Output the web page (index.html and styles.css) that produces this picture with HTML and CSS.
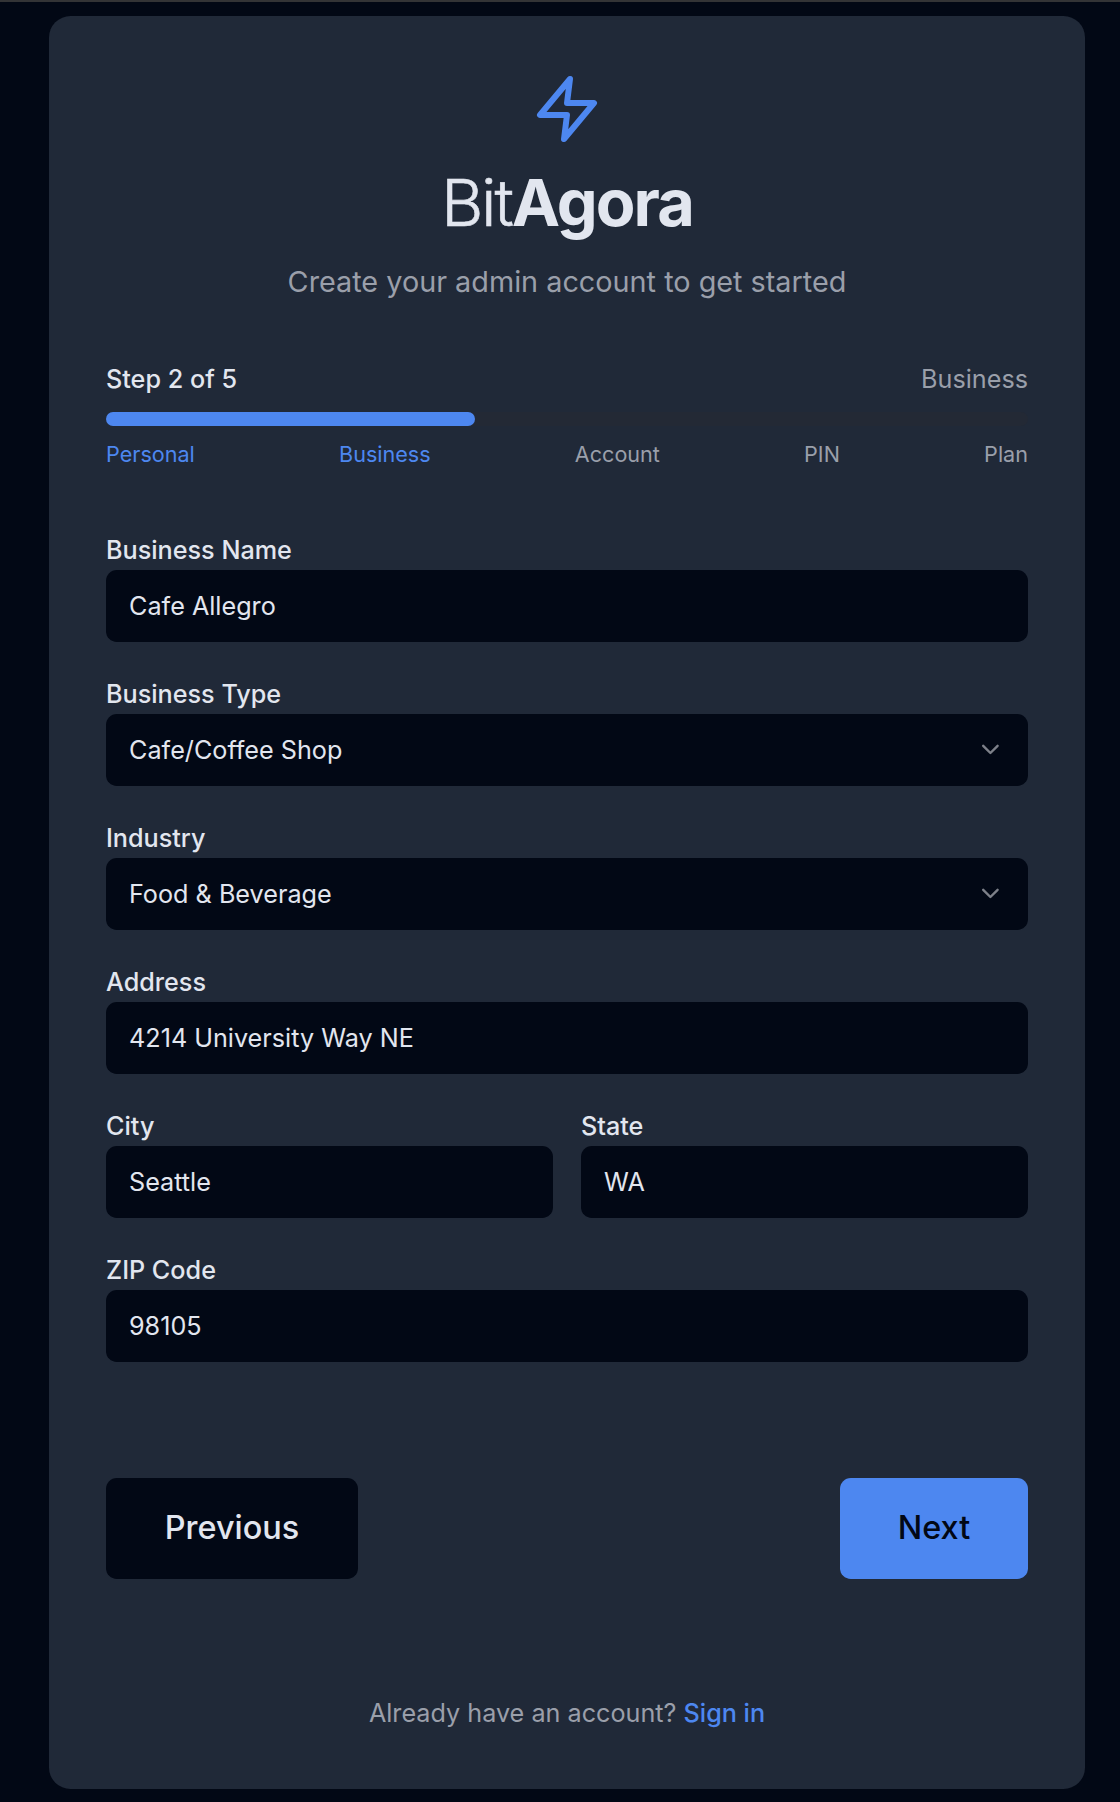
FILE: index.html
```html
<!DOCTYPE html>
<html lang="en">
<head>
<meta charset="utf-8">
<title>BitAgora – Create account</title>
<link rel="stylesheet" href="styles.css">
</head>
<body>
<main class="card">
  <header class="brand">
    <svg class="brand-icon" viewBox="0 0 24 24" fill="none" stroke="currentColor" stroke-width="2" stroke-linecap="round" stroke-linejoin="round"><polygon points="13 2 3 14 12 14 11 22 21 10 12 10 13 2"/></svg>
    <h1 class="brand-name"><span class="light">Bit</span><span>Agora</span></h1>
    <p class="tagline">Create your admin account to get started</p>
  </header>

  <section class="progress">
    <div class="progress-head"><span class="progress-step">Step 2 of 5</span><span class="progress-title">Business</span></div>
    <div class="progress-track"><div class="progress-fill" style="width:40%"></div></div>
    <div class="progress-labels">
      <span class="done">Personal</span><span class="done">Business</span><span>Account</span><span>PIN</span><span>Plan</span>
    </div>
  </section>

  <form class="form">
    <div class="field">
      <label for="name">Business Name</label>
      <input id="name" class="control" type="text" value="Cafe Allegro">
    </div>
    <div class="field">
      <label>Business Type</label>
      <button type="button" class="control select"><span>Cafe/Coffee Shop</span><svg class="chevron" viewBox="0 0 24 24"><path d="m6 9 6 6 6-6"/></svg></button>
    </div>
    <div class="field">
      <label>Industry</label>
      <button type="button" class="control select"><span>Food &amp; Beverage</span><svg class="chevron" viewBox="0 0 24 24"><path d="m6 9 6 6 6-6"/></svg></button>
    </div>
    <div class="field">
      <label for="address">Address</label>
      <input id="address" class="control" type="text" value="4214 University Way NE">
    </div>
    <div class="row">
      <div class="field">
        <label for="city">City</label>
        <input id="city" class="control" type="text" value="Seattle">
      </div>
      <div class="field">
        <label for="state">State</label>
        <input id="state" class="control" type="text" value="WA">
      </div>
    </div>
    <div class="field">
      <label for="zip">ZIP Code</label>
      <input id="zip" class="control" type="text" value="98105">
    </div>
    <div class="actions">
      <button type="button" class="btn btn-dark">Previous</button>
      <button type="button" class="btn btn-primary">Next</button>
    </div>
  </form>

  <p class="signin">Already have an account? <a href="#">Sign in</a></p>
</main>
</body>
</html>
```
FILE: styles.css
```css
:root {
  --bg: #020815;
  --card: #202938;
  --text: #e2e6ef;
  --muted: #9a9faa;
  --primary: #4d87f0;
}

* { box-sizing: border-box; }

html { font-size: 28.8px; }

body {
  margin: 0;
  height: 1802px;
  padding: 14px 0 0 49px;
  border-top: 2px solid #333436;
  background: var(--bg);
  color: var(--text);
  font-family: Inter, "Liberation Sans", sans-serif;
  overflow: hidden;
}

h1, p { margin: 0; }

.card {
  width: 1036px;
  height: 1773px;
  padding: 57px;
  border-radius: 21.6px;
  background: var(--card);
}

.brand {
  display: flex;
  flex-direction: column;
  align-items: center;
}

.brand-icon {
  width: 72px;
  height: 72px;
  color: var(--primary);
}

.brand-name {
  margin-top: 21.6px;
  font-size: 64.8px;
  line-height: 72px;
  font-weight: 700;
  letter-spacing: -0.03em;
}

.light {
  font-weight: 300;
  -webkit-text-stroke: 0.6px currentColor;
}

.tagline {
  margin-top: 21px;
  font-size: 28.8px;
  line-height: 43.2px;
  color: var(--muted);
}

.progress { margin-top: 58px; }

.progress-head {
  display: flex;
  justify-content: space-between;
  font-size: 25.2px;
  line-height: 36px;
}

.progress-step { font-weight: 500; }
.progress-title { color: var(--muted); }

.progress-track {
  height: 14px;
  margin-top: 15px;
  border-radius: 7px;
  background: #232935;
}

.progress-fill {
  height: 100%;
  border-radius: 7px;
  background: var(--primary);
}

.progress-labels {
  display: flex;
  justify-content: space-between;
  margin-top: 14px;
  font-size: 21.6px;
  line-height: 28.8px;
  color: var(--muted);
}

.progress-labels .done { color: var(--primary); }

.form {
  display: flex;
  flex-direction: column;
  gap: 36px;
  margin-top: 65px;
}

.row {
  display: grid;
  grid-template-columns: 1fr 1fr;
  gap: 28px;
}

.field {
  display: flex;
  flex-direction: column;
  min-width: 0;
}

.field label {
  height: 36px;
  font-size: 25.2px;
  line-height: 32px;
  font-weight: 500;
}

.control {
  width: 100%;
  height: 72px;
  padding: 0 23px;
  border: 0;
  border-radius: 10.8px;
  background: var(--bg);
  color: var(--text);
  font: 400 25.2px/36px Inter, "Liberation Sans", sans-serif;
  text-align: left;
}

.select {
  display: flex;
  align-items: center;
  justify-content: space-between;
}

.chevron {
  width: 28.8px;
  height: 28.8px;
  fill: none;
  stroke: #7d8089;
  stroke-width: 2;
  stroke-linecap: round;
  stroke-linejoin: round;
}

.actions {
  display: flex;
  justify-content: space-between;
  margin-top: 80px;
}

.btn {
  height: 101px;
  border: 0;
  border-radius: 10.8px;
  font: 500 32.4px/50px Inter, "Liberation Sans", sans-serif;
}

.btn-dark {
  width: 252px;
  background: var(--bg);
  color: var(--text);
}

.btn-primary {
  width: 188px;
  background: var(--primary);
  color: var(--bg);
}

.signin {
  margin-top: 116px;
  font-size: 25.2px;
  line-height: 36px;
  text-align: center;
  color: var(--muted);
}

.signin a {
  color: var(--primary);
  font-weight: 500;
  text-decoration: none;
}
```
